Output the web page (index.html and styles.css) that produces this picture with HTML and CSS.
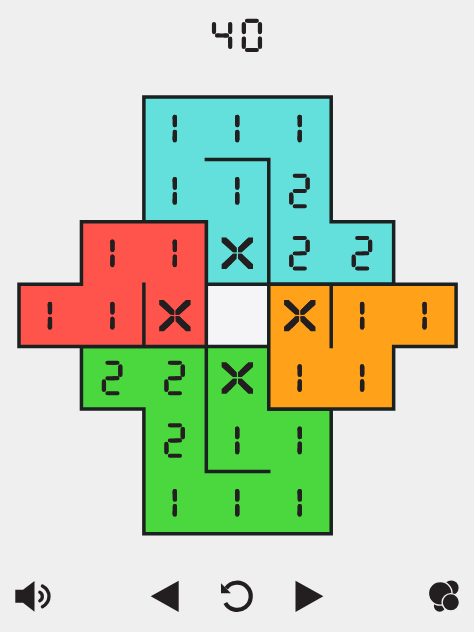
FILE: index.html
```
<!DOCTYPE html>
<html lang="en">
<head>
<meta charset="utf-8">
<title>40</title>
<link rel="stylesheet" href="styles.css">
</head>
<body>
<!-- Segment stencils shared by all digits -->
<svg class="defs" width="0" height="0" aria-hidden="true">
  <clipPath id="seg-1"><rect x="9.7" y="5.2" width="4.4" height="12.6" rx="2.2"/><rect x="9.7" y="20.2" width="4.4" height="12.8" rx="2.2"/></clipPath>
  <clipPath id="seg-2"><rect x="4.9" y="1.8" width="14.2" height="4" rx="2"/><rect x="17.8" y="5.3" width="4.3" height="12.7" rx="2.1"/><rect x="4.9" y="17.2" width="14.2" height="3.9" rx="1.9"/><rect x="1.3" y="20.3" width="4.3" height="12.7" rx="2.1"/><rect x="4.9" y="32.3" width="14.2" height="4" rx="2"/></clipPath>
  <clipPath id="seg-4"><rect x="1.8" y="5.6" width="4.2" height="12.2" rx="2.1"/><rect x="18" y="5.6" width="4.2" height="12.2" rx="2.1"/><rect x="5" y="17.2" width="14" height="3.9" rx="1.9"/><rect x="18" y="20.2" width="4.2" height="12.4" rx="2.1"/></clipPath>
  <clipPath id="seg-0"><rect x="1.8" y="5.6" width="4.2" height="12.2" rx="2.1"/><rect x="18" y="5.6" width="4.2" height="12.2" rx="2.1"/><rect x="5" y="2.3" width="14" height="4" rx="2"/><rect x="1.8" y="20.2" width="4.2" height="12.4" rx="2.1"/><rect x="18" y="20.2" width="4.2" height="12.4" rx="2.1"/><rect x="5" y="31.6" width="14" height="4" rx="2"/></clipPath>
  <clipPath id="seg-x">
    <polygon points="2.3,3.3 7,3.3 17.3,13.5 17.3,18 13.5,18 2.3,8"/>
    <polygon points="33.7,3.3 29,3.3 18.7,13.5 18.7,18 22.5,18 33.7,8"/>
    <polygon points="2.3,34.7 7,34.7 17.3,24.5 17.3,19.6 13.5,19.6 2.3,30"/>
    <polygon points="33.7,34.7 29,34.7 18.7,24.5 18.7,19.6 22.5,19.6 33.7,30"/>
  </clipPath>
</svg>
<div class="game">
  <header class="level"><span class="s s4">4</span><span class="s s0">0</span></header>
  <main class="board">
    <svg class="pieces" viewBox="0 0 7 7" preserveAspectRatio="none" aria-hidden="true">
      <path class="hole" d="M3 3H4V4H3Z"/>
      <path class="cyan" d="M2 0H5V2H6V3H3V2H2Z"/><path class="wall" d="M2.973 1H4V3"/>
      <path class="green" d="M1 4H4V5H5V7H2V5H1Z"/><path class="wall" d="M3 4V6H4.027"/>
      <path class="red" d="M1 2H3V4H0V3H1Z"/><path class="wall" d="M2 2.973V4"/>
      <path class="orange" d="M4 3H7V4H6V5H4Z"/><path class="wall" d="M5 3V4.027"/>
    </svg>
    <div class="row"><i></i><i></i><b class="s s1">1</b><b class="s s1">1</b><b class="s s1">1</b><i></i><i></i></div>
    <div class="row"><i></i><i></i><b class="s s1">1</b><b class="s s1">1</b><b class="s s2">2</b><i></i><i></i></div>
    <div class="row"><i></i><b class="s s1">1</b><b class="s s1">1</b><b class="s sx">X</b><b class="s s2">2</b><b class="s s2">2</b><i></i></div>
    <div class="row"><b class="s s1">1</b><b class="s s1">1</b><b class="s sx">X</b><i></i><b class="s sx">X</b><b class="s s1">1</b><b class="s s1">1</b></div>
    <div class="row"><i></i><b class="s s2">2</b><b class="s s2">2</b><b class="s sx">X</b><b class="s s1">1</b><b class="s s1">1</b><i></i></div>
    <div class="row"><i></i><i></i><b class="s s2">2</b><b class="s s1">1</b><b class="s s1">1</b><i></i><i></i></div>
    <div class="row"><i></i><i></i><b class="s s1">1</b><b class="s s1">1</b><b class="s s1">1</b><i></i><i></i></div>
  </main>
  <footer class="controls">
    <button aria-label="Sound"><svg width="38" height="36" viewBox="14 578 38 36"><path d="M15.3 589.7H23L34.5 581V611.7L23 602.7H15.3Z"/><path class="line" d="M39.8 592.2Q42.3 593.3 42.3 596.5T39.8 600.8M42.4 586Q49 589.6 49 596.3T42.4 606.8"/></svg></button>
    <button aria-label="Previous"><svg width="30" height="36" viewBox="150 578 30 36"><path d="M150.7 596.3L178.7 580.7V612Z"/></svg></button>
    <button aria-label="Restart"><svg width="36" height="36" viewBox="219 578 36 36"><path class="ring" d="M225.3 603A13.6 13.6 0 1 0 226.2 588.2"/><path d="M221 583.3L230.9 593.3H221Z"/></svg></button>
    <button aria-label="Next"><svg width="30" height="36" viewBox="294 578 30 36"><path d="M323.4 596.3L295.5 580.7V612Z"/></svg></button>
    <button aria-label="Themes"><svg width="34" height="36" viewBox="427 578 34 36"><circle cx="451.2" cy="587.8" r="7.4"/><circle cx="439.7" cy="606" r="5.8"/><circle class="edge" cx="440.2" cy="593.3" r="11.8"/><circle class="edge" cx="450.8" cy="602.3" r="8.7"/></svg></button>
  </footer>
</div>
</body>
</html>
```
FILE: styles.css
```
body {
  margin: 0;
  background: #efefef;
  color: #231f20;
  font-family: "Liberation Sans", Arial, sans-serif;
}
.defs { display: block; }
.game {
  width: 474px;
  height: 632px;
  display: flex;
  flex-direction: column;
  overflow: hidden;
}
.level {
  display: flex;
  justify-content: center;
  gap: 5.8px;
  padding-top: 16.4px;
  height: 80.9px;
}
.board {
  display: grid;
  grid-template-rows: repeat(7, 62.4px);
  grid-template-columns: 437.1px;
  margin-left: 18.8px;
}
.pieces {
  grid-area: 1 / 1 / -1 / -1;
  width: 437.1px;
  height: 436.8px;
  overflow: visible;
}
.pieces path {
  stroke: #1b2020;
  stroke-width: 3.5px;
  vector-effect: non-scaling-stroke;
}
.pieces .hole { fill: #f5f5f8; stroke: none; }
.cyan { fill: #63dfdc; }
.red { fill: #ff544c; }
.green { fill: #4bd73e; }
.orange { fill: #ffa21a; }
.wall { fill: none; }
.row {
  grid-column: 1;
  display: grid;
  grid-template-columns: repeat(7, 1fr);
  place-items: center;
}
.row:nth-of-type(1) { grid-row: 1; }
.row:nth-of-type(2) { grid-row: 2; }
.row:nth-of-type(3) { grid-row: 3; }
.row:nth-of-type(4) { grid-row: 4; }
.row:nth-of-type(5) { grid-row: 5; }
.row:nth-of-type(6) { grid-row: 6; }
.row:nth-of-type(7) { grid-row: 7; }
/* Heavily stroked characters, cut into display segments by a stencil */
.s {
  width: 24px;
  height: 38px;
  font-size: 36px;
  font-weight: bold;
  line-height: 38px;
  text-align: center;
  -webkit-text-stroke: 22px currentColor;
}
.s0 { clip-path: url(#seg-0); }
.s1 { clip-path: url(#seg-1); }
.s2 { clip-path: url(#seg-2); }
.s4 { clip-path: url(#seg-4); }
.sx { width: 36px; clip-path: url(#seg-x); }
.controls {
  display: grid;
  grid-template-columns: 136px 69px 75px 133px 34px;
  margin: 43.9px 0 0 14px;
}
button {
  padding: 0;
  border: 0;
  background: none;
  text-align: left;
}
button svg { display: block; fill: #231f20; }
.line { fill: none; stroke: #231f20; stroke-width: 3.3px; stroke-linecap: round; }
.ring { fill: none; stroke: #231f20; stroke-width: 4.2px; }
.edge { stroke: #efefef; stroke-width: 1.4px; }
```
